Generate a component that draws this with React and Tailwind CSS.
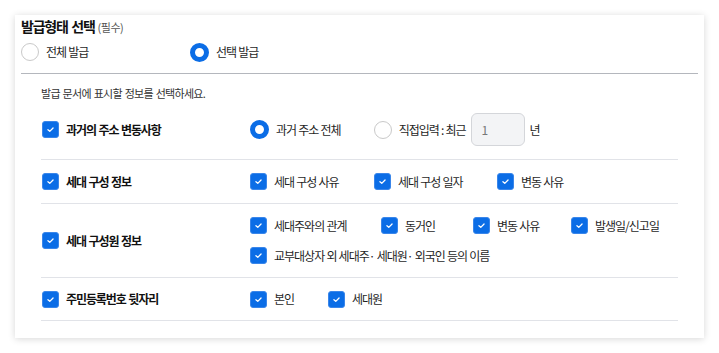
import React from "react";

function Check() {
  return (
    <span className="inline-flex items-center justify-center w-[17px] h-[17px] rounded-[3px] bg-[#0b6de6] border border-[#3a86ea] shrink-0">
      <svg width="11" height="11" viewBox="0 0 12 12" fill="none">
        <path d="M3.2 6.2 L5.2 8 L8.8 4.3" stroke="white" strokeWidth="1.4" strokeLinecap="round" strokeLinejoin="round" />
      </svg>
    </span>
  );
}

function Radio({ checked }) {
  return checked ? (
    <span className="inline-block w-[19px] h-[19px] rounded-full border-[5px] border-[#0b6de6] bg-white shrink-0" />
  ) : (
    <span className="inline-block w-[18px] h-[18px] rounded-full border border-[#c9c9c9] bg-white shrink-0" />
  );
}

const T = "text-[12px] leading-[20px] text-[#1f1f1f] tracking-[-1px] [word-spacing:0.5px]";

function CItem({ children }) {
  return (
    <div className="flex items-center gap-[7px] whitespace-nowrap">
      <Check />
      <span className={T}>{children}</span>
    </div>
  );
}

function Label({ children }) {
  return (
    <div className="w-[209px] shrink-0 flex items-center gap-[7px] pl-[1px] whitespace-nowrap">
      <Check />
      <span className="text-[12px] font-bold leading-[20px] text-[#111] tracking-[-1.1px] [word-spacing:1px]">{children}</span>
    </div>
  );
}

export default function App() {
  return (
    <div
      className="w-[719px] h-[353px] bg-white pt-[15px] px-[15px]"
      style={{ fontFamily: '"Noto Sans CJK KR", "Noto Sans", sans-serif' }}
    >
      <div className="h-[323px] bg-white shadow-[0_1px_7px_rgba(0,0,0,0.16)] px-[6px]">
        <div className="pt-[1px] leading-[18px] whitespace-nowrap">
          <span className="text-[14px] font-bold text-[#111] tracking-[-1.2px] [word-spacing:1.5px]">발급형태 선택</span>
          <span className="text-[11px] text-[#555] ml-[3px] tracking-[-0.5px]">(필수)</span>
        </div>
        <div className="flex items-center h-[30px] mt-[1px] whitespace-nowrap">
          <div className="w-[169px] flex items-center gap-[7px]">
            <Radio />
            <span className={T}>전체 발급</span>
          </div>
          <div className="flex items-center gap-[7px]">
            <Radio checked />
            <span className={T}>선택 발급</span>
          </div>
        </div>
        <div className="mt-[6px] border-t border-[#b4b7bd]" />
        <div className="px-[20px]">
          <div className="pt-[12px] text-[11px] leading-[14px] text-[#333] tracking-[-0.7px] [word-spacing:1px]">
            발급 문서에 표시할 정보를 선택하세요.
          </div>
          <div className="h-[60px] flex items-center border-b border-[#e1e3e8]">
            <Label>과거의 주소 변동사항</Label>
            <div className="flex items-center whitespace-nowrap">
              <div className="flex items-center gap-[7px]">
                <Radio checked />
                <span className={T}>과거 주소 전체</span>
              </div>
              <div className="flex items-center gap-[7px] ml-[33px]">
                <Radio />
                <span className={T}>직접입력 : 최근</span>
              </div>
              <div className="ml-[5px] w-[54px] h-[33px] rounded-[6px] border border-[#d4d6da] bg-[#f3f4f6] flex items-center pl-[10px] text-[12px] text-[#777]">
                1
              </div>
              <span className="ml-[5px] text-[12px] text-[#222]">년</span>
            </div>
          </div>
          <div className="h-[44px] flex items-center border-b border-[#e1e3e8]">
            <Label>세대 구성 정보</Label>
            <div className="flex items-center">
              <div className="w-[124px]"><CItem>세대 구성 사유</CItem></div>
              <div className="w-[123px]"><CItem>세대 구성 일자</CItem></div>
              <CItem>변동 사유</CItem>
            </div>
          </div>
          <div className="h-[74px] flex items-center border-b border-[#e1e3e8]">
            <Label>세대 구성원 정보</Label>
            <div className="flex flex-col gap-[10px]">
              <div className="flex items-center">
                <div className="w-[131px]"><CItem>세대주와의 관계</CItem></div>
                <div className="w-[92px]"><CItem>동거인</CItem></div>
                <div className="w-[98px]"><CItem>변동 사유</CItem></div>
                <CItem>발생일/신고일</CItem>
              </div>
              <div className="flex items-center">
                <CItem>교부대상자 외 세대주· 세대원· 외국인 등의 이름</CItem>
              </div>
            </div>
          </div>
          <div className="h-[43px] flex items-center border-b border-[#e1e3e8]">
            <Label>주민등록번호 뒷자리</Label>
            <div className="flex items-center">
              <div className="w-[78px]"><CItem>본인</CItem></div>
              <CItem>세대원</CItem>
            </div>
          </div>
        </div>
      </div>
    </div>
  );
}
